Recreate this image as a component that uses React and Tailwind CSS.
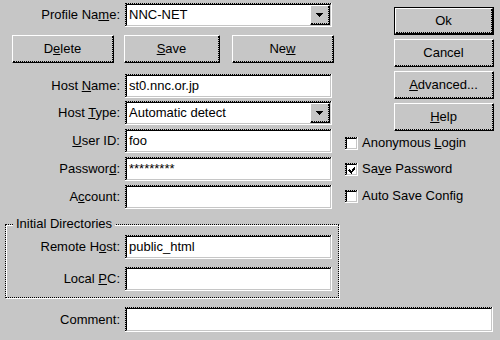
import React from 'react';

function Sunken({ className = '', children }) {
  return (
    <div className={`border-r border-b border-white ${className}`}>
      <div className="h-full border-t border-l border-dotted border-black">
        <div className="h-full flex items-center bg-white border border-black border-r-[#c6c6c6] border-b-[#c6c6c6]">
          {children}
        </div>
      </div>
    </div>
  );
}

function Raised({ className = '', children }) {
  return (
    <div className={`border border-white border-r-black border-b-black bg-[#c6c6c6] ${className}`}>
      <div className="h-full flex items-center justify-center border-r border-b border-dotted border-black">
        {children}
      </div>
    </div>
  );
}

function Button({ className = '', def = false, children }) {
  if (def) {
    return (
      <div className={`border border-black ${className}`}>
        <Raised className="h-full">{children}</Raised>
      </div>
    );
  }
  return <Raised className={className}>{children}</Raised>;
}

function DropButton() {
  return (
    <Raised className="w-[20px] h-full shrink-0">
      <svg width="7" height="4" viewBox="0 0 7 4" shapeRendering="crispEdges">
        <polygon points="0,0 7,0 3.5,4" fill="black" />
      </svg>
    </Raised>
  );
}

function Row({ label, labelW = 'w-[125px]', className = '', children }) {
  return (
    <div className={`flex items-center ${className}`}>
      <div className={`${labelW} shrink-0 pr-[5px] text-right whitespace-nowrap`}>{label}</div>
      {children}
    </div>
  );
}

function Field({ value, className = 'w-[207px] h-[24px]' }) {
  return (
    <Sunken className={className}>
      <span className="pl-[2px] whitespace-nowrap">{value}</span>
    </Sunken>
  );
}

function Combo({ value }) {
  return (
    <Sunken className="w-[207px] h-[24px]">
      <span className="flex-1 pl-[2px] whitespace-nowrap">{value}</span>
      <DropButton />
    </Sunken>
  );
}

function Check({ checked, children, className = '' }) {
  return (
    <div className={`flex items-center h-[16px] ${className}`}>
      <Sunken className="w-[13px] h-[13px] shrink-0">
        {checked && (
          <svg width="9" height="9" viewBox="0 0 9 9" shapeRendering="crispEdges" className="ml-[1px]">
            <path d="M1 4h1v1h1v1h1v-1h1v-1h1v-1h1v-1h1v3h-1v1h-1v1h-1v1h-1v1h-1v-1h-1v-1h-1v-1h-1z" fill="black" />
          </svg>
        )}
      </Sunken>
      <span className="ml-[4px] whitespace-nowrap">{children}</span>
    </div>
  );
}

export default function App() {
  return (
    <div className="w-[500px] h-[340px] bg-[#c6c6c6] text-black text-[13px] leading-[16px] font-['Liberation_Sans',Arial,sans-serif] overflow-hidden">
      <div className="flex">
        {/* left column */}
        <div className="w-[340px] shrink-0">
          <Row className="mt-[3px]" label={<>Profile Na<u>m</u>e:</>}>
            <Combo value="NNC-NET" />
          </Row>
          <div className="flex mt-[8px] h-[28px]">
            <Button className="ml-[12px] w-[102px]"><span>D<u>e</u>lete</span></Button>
            <Button className="ml-[10px] w-[96px]"><span><u>S</u>ave</span></Button>
            <Button className="ml-[12px] w-[102px]"><span>Ne<u>w</u></span></Button>
          </div>
          <Row className="mt-[11px]" label={<>Host <u>N</u>ame:</>}>
            <Field value="st0.nnc.or.jp" />
          </Row>
          <Row className="mt-[3px]" label={<>Host <u>T</u>ype:</>}>
            <Combo value="Automatic detect" />
          </Row>
          <Row className="mt-[4px]" label={<><u>U</u>ser ID:</>}>
            <Field value="foo" />
          </Row>
          <Row className="mt-[4px]" label={<>Passwor<u>d</u>:</>}>
            <Field value="*********" />
          </Row>
          <Row className="mt-[4px]" label={<>A<u>c</u>count:</>}>
            <Field value="" />
          </Row>

          <fieldset className="ml-[5px] mt-[7px] w-[334px] border border-dotted border-black pb-[6px] shadow-[inset_1px_1px_0_white,1px_1px_0_white]">
            <legend className="ml-[7px] px-[3px] bg-[#c6c6c6] leading-[16px]">Initial Directories</legend>
            <Row className="mt-[3px]" labelW="w-[119px]" label={<>Remote H<u>o</u>st:</>}>
              <Field value="public_html" />
            </Row>
            <Row className="mt-[8px]" labelW="w-[119px]" label={<>Local <u>P</u>C:</>}>
              <Field value="" />
            </Row>
          </fieldset>
        </div>

        {/* right column */}
        <div className="flex-1 pl-[5px]">
          <div className="ml-[49px] w-[100px] mt-[7px] flex flex-col gap-[4px]">
            <Button def className="h-[28px]">Ok</Button>
            <Button className="h-[28px]">Cancel</Button>
            <Button className="h-[28px]"><span><u>A</u>dvanced...</span></Button>
            <Button className="h-[28px]"><span><u>H</u>elp</span></Button>
          </div>
          <Check className="mt-[4px]">Anonymous <u>L</u>ogin</Check>
          <Check checked className="mt-[10px]">Sa<u>v</u>e Password</Check>
          <Check className="mt-[11px]">Auto Save Config</Check>
        </div>
      </div>

      <Row className="mt-[9px]" label="Comment:">
        <Field value="" className="w-[368px] h-[25px]" />
      </Row>
    </div>
  );
}
